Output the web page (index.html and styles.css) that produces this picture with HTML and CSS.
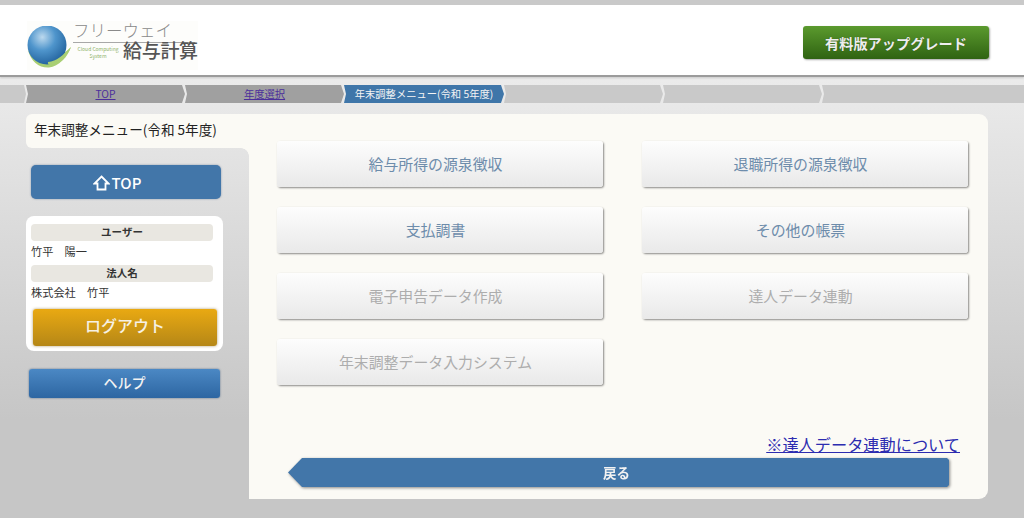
FILE: index.html
```html
<!DOCTYPE html>
<html lang="ja">
<head>
<meta charset="utf-8">
<title>年末調整メニュー</title>
<link rel="stylesheet" href="styles.css">
</head>
<body>
<header class="header">
  <div class="logo">
    <svg class="globe" width="46" height="44" viewBox="0 0 46 44" aria-hidden="true">
      <defs>
        <radialGradient id="g" cx="38%" cy="30%" r="75%">
          <stop offset="0" stop-color="#bcd9ee"/>
          <stop offset=".45" stop-color="#4f95cc"/>
          <stop offset="1" stop-color="#1f5f9a"/>
        </radialGradient>
      </defs>
      <path d="M1 24C4 36 12 42 22 41.500C32 41 40 30 44 21C38 27 31 32 22 33C13 34 6 31 1 24Z" fill="#a9cf73"/>
      <circle cx="20" cy="19" r="19.500" fill="url(#g)"/>
      <path d="M21 36C30 35 35 30 44 21C41 29 37 35 29 38C24 40 20 39 21 36Z" fill="#a9cf73"/>
    </svg>
    <div class="logo-text">
      <div class="logo-top">フリーウェイ</div>
      <div class="logo-bottom">
        <div class="logo-cloud">Cloud Computing<br>System</div>
        <div class="logo-name">給与計算</div>
      </div>
    </div>
  </div>
  <a class="upgrade">有料版アップグレード</a>
</header>

<nav class="crumbs">
  <span class="crumb stub"></span>
  <a class="crumb done" href="#">TOP</a>
  <a class="crumb done" href="#">年度選択</a>
  <span class="crumb active">年末調整メニュー(令和 5年度)</span>
  <span class="crumb"></span>
  <span class="crumb"></span>
  <span class="crumb last"></span>
</nav>

<main class="main">
  <aside class="left">
    <h1 class="tab">年末調整メニュー(令和 5年度)</h1>
    <div class="side">
      <a class="top-btn">
        <svg width="17" height="16" viewBox="0 0 17 16" aria-hidden="true"><path d="M8.500 1.500L15.500 8.500H12.500V14.500H4.500V8.500H1.500Z" fill="none" stroke="#fff" stroke-width="1.800" stroke-linejoin="miter"/></svg>
        <span>TOP</span>
      </a>
      <div class="card">
        <div class="label">ユーザー</div>
        <div class="value">竹平　陽一</div>
        <div class="label">法人名</div>
        <div class="value">株式会社　竹平</div>
        <a class="logout">ログアウト</a>
      </div>
      <a class="help">ヘルプ</a>
    </div>
  </aside>
  <section class="panel">
    <div class="grid">
      <a class="btn">給与所得の源泉徴収</a>
      <a class="btn">退職所得の源泉徴収</a>
      <a class="btn">支払調書</a>
      <a class="btn">その他の帳票</a>
      <a class="btn off">電子申告データ作成</a>
      <a class="btn off">達人データ連動</a>
      <a class="btn off">年末調整データ入力システム</a>
    </div>
    <div class="foot">
      <a class="note" href="#">※達人データ連動について</a>
      <div class="back-wrap"><a class="back">戻る</a></div>
    </div>
  </section>
</main>
</body>
</html>
```

FILE: styles.css
```css
* { box-sizing: border-box; }
html, body { margin: 0; height: 518px; overflow: hidden; }
body {
  font-family: "Noto Sans CJK JP", "Noto Sans", sans-serif;
  background: linear-gradient(#ebebeb 80px, #c6c6c6 420px);
  border-top: 5px solid #c9c9c9;
  color: #222;
}
a { cursor: pointer; }

.header {
  height: 72px;
  background: #fff;
  border-bottom: 2px solid #9b9b9b;
  box-shadow: 0 1px 2px rgba(0,0,0,.15);
  display: flex;
  justify-content: space-between;
  align-items: flex-start;
  padding: 21px 35px 0 27px;
}
.logo { display: flex; align-items: flex-start; background: #fdfdfb; margin-top: -5px; padding-top: 5px; }
.logo-text { width: 125px; margin-top: -7px; }
.logo-top { font-size: 16.500px; line-height: 22px; color: #8a8a8a; font-weight: 300; border-bottom: 1px solid #a8a8a8; width: 122px; height: 24px; }
.logo-bottom { display: flex; align-items: center; margin-top: -5px; }
.logo-cloud { width: 50px; font-size: 5px; line-height: 7px; color: #8fb36a; text-align: center; flex: none; margin-top: 3px; }
.logo-name { font-size: 19px; line-height: 24px; color: #555; font-weight: 500; white-space: nowrap; margin-left: 0; letter-spacing: -.3px; }

.upgrade {
  width: 186px;
  height: 33px;
  display: flex;
  align-items: center;
  justify-content: center;
  background: linear-gradient(#5b9a2e, #2f6312);
  border-radius: 3px;
  color: #eee;
  font-size: 14.200px;
  font-weight: 700;
  box-shadow: 1px 1px 2px rgba(0,0,0,.35);
  text-shadow: 0 0 1px rgba(0,0,0,.4);
}

.crumbs { display: flex; height: 18px; margin-top: 8px; }
.crumb {
  width: 159px;
  flex: none;
  background: #c9c9c9;
  font-size: 10.300px;
  line-height: 18px;
  text-align: center;
  clip-path: polygon(0 0, calc(100% - 3px) 0, 100% 50%, calc(100% - 3px) 100%, 0 100%, 2px 50%);
}
.stub { width: 26px; clip-path: polygon(0 0, calc(100% - 2px) 0, 100% 50%, calc(100% - 2px) 100%, 0 100%); }
.done { background: #a0a0a0; color: #4b2f9b; }
.active { background: #3f76a9; color: #f4f4f4; width: 160px; }
.last { width: 202px; clip-path: polygon(0 0, 100% 0, 100% 100%, 0 100%, 2px 50%); }

.main { display: flex; margin: 11px 36px 0 26px; height: 385px; }
.left { width: 223px; flex: none; }
.tab {
  margin: 0;
  height: 34px;
  padding: 0 0 0 8px;
  font-size: 13.600px;
  font-weight: 400;
  line-height: 30px;
  background: #fbfaf5;
  border-radius: 6px 0 0 6px;
  white-space: nowrap;
}
.side { position: relative; padding: 17px 2px 0 0; display: flex; flex-direction: column; }
.side::after {
  content: "";
  position: absolute;
  top: 0;
  right: 0;
  width: 8px;
  height: 8px;
  background: radial-gradient(circle at 0 100%, transparent 7.500px, #fbfaf5 8px);
}
.top-btn {
  height: 34px;
  width: 190px;
  margin-left: 5px;
  padding: 1px 18px 0 0;
  background: #4276a9;
  border-radius: 5px;
  box-shadow: 0 0 2px rgba(60,90,130,.6);
  color: #fff;
  display: flex;
  align-items: center;
  justify-content: center;
  font-size: 15px;
  font-weight: 500;
  gap: 2px;
}
.card {
  margin-top: 17px;
  width: 197px;
  height: 135px;
  background: #fff;
  border-radius: 8px;
  padding: 8px 6px 0 5px;
  display: flex;
  flex-direction: column;
}
.label {
  height: 17px;
  width: 182px;
  background: #e9e7e1;
  border-radius: 4px;
  font-size: 10.500px;
  font-weight: 700;
  line-height: 16px;
  text-align: center;
  color: #333;
}
.value { font-size: 11.200px; line-height: 20px; height: 24px; color: #333; }
.logout {
  margin: 3px 0 0 2px;
  width: 184px;
  height: 37px;
  padding-bottom: 6px;
  background: linear-gradient(#e9a912, #b58717);
  border-radius: 3px;
  box-shadow: 0 0 3px rgba(120,90,20,.6);
  color: #f6f1e4;
  font-size: 16px;
  font-weight: 500;
  display: flex;
  align-items: center;
  justify-content: center;
}
.help {
  margin: 18px 0 0 3px;
  width: 191px;
  height: 29px;
  padding-bottom: 4px;
  background: linear-gradient(#4b88c4, #2d66a2);
  border-radius: 3px;
  box-shadow: 0 0 2px rgba(50,80,120,.8);
  color: #f2f2f2;
  font-size: 14px;
  font-weight: 500;
  display: flex;
  align-items: center;
  justify-content: center;
}

.panel {
  flex: 1;
  min-width: 0;
  background: #fbfaf5;
  border-radius: 0 9px 9px 0;
  padding: 27px 0 0 28px;
  display: flex;
  flex-direction: column;
}
.grid { display: grid; grid-template-columns: 326px 326px; column-gap: 39px; row-gap: 20px; grid-auto-rows: 46px; }
.btn {
  background: linear-gradient(#fdfdfd, #e9e9e9);
  border-radius: 3px;
  box-shadow: 1px 1px 2px rgba(0,0,0,.45);
  color: #6d8cab;
  font-size: 14.900px;
  padding: 0 9px 2px 0;
  display: flex;
  align-items: center;
  justify-content: center;
}
.off { color: #adadad; }
.foot { margin-top: auto; display: flex; flex-direction: column; align-items: flex-end; padding: 0 28px 12px 11px; }
.note { font-size: 16.200px; line-height: 22px; color: #2c2cb0; white-space: nowrap; margin-bottom: 3px; }
.back-wrap { width: 661px; align-self: flex-start; filter: drop-shadow(1px 1px 1.500px rgba(0,0,0,.45)); }
.back {
  display: block;
  height: 29px;
  padding-right: 4px;
  background: #4276a9;
  color: #f2f2f2;
  font-size: 13.500px;
  font-weight: 700;
  line-height: 28px;
  text-align: center;
  clip-path: polygon(14px 0, calc(100% - 2px) 0, 100% 2px, 100% calc(100% - 2px), calc(100% - 2px) 100%, 14px 100%, 0 50%);
}
```
